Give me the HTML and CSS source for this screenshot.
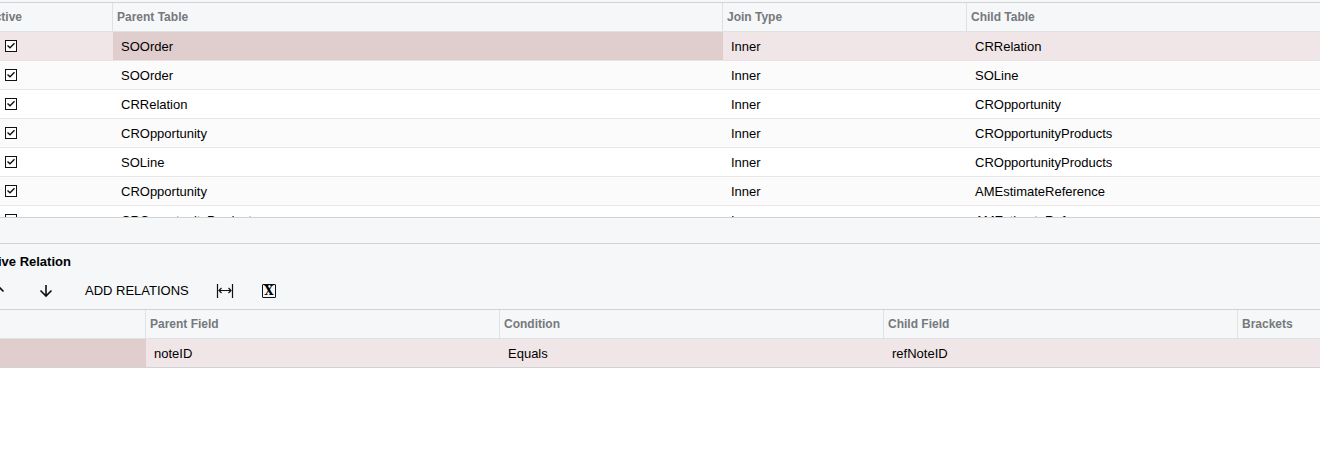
FILE: index.html
```html
<!DOCTYPE html>
<html lang="en">
<head>
    <meta charset="UTF-8">
    <title>Relations</title>
    <link rel="stylesheet" href="styles.css">
</head>
<body>
    <main class="page">
        <section class="grid tables-grid">
            <table>
                <colgroup>
                    <col class="col-active">
                    <col class="col-parent">
                    <col class="col-join">
                    <col>
                </colgroup>
                <thead>
                    <tr><th class="active-head">Active</th><th>Parent Table</th><th>Join Type</th><th>Child Table</th></tr>
                </thead>
                <tbody>
                    <tr class="selected">
                        <td class="check-cell"><input type="checkbox" aria-label="Active" checked></td>
                        <td class="current">SOOrder</td><td>Inner</td><td>CRRelation</td>
                    </tr>
                    <tr>
                        <td class="check-cell"><input type="checkbox" aria-label="Active" checked></td>
                        <td>SOOrder</td><td>Inner</td><td>SOLine</td>
                    </tr>
                    <tr>
                        <td class="check-cell"><input type="checkbox" aria-label="Active" checked></td>
                        <td>CRRelation</td><td>Inner</td><td>CROpportunity</td>
                    </tr>
                    <tr>
                        <td class="check-cell"><input type="checkbox" aria-label="Active" checked></td>
                        <td>CROpportunity</td><td>Inner</td><td>CROpportunityProducts</td>
                    </tr>
                    <tr>
                        <td class="check-cell"><input type="checkbox" aria-label="Active" checked></td>
                        <td>SOLine</td><td>Inner</td><td>CROpportunityProducts</td>
                    </tr>
                    <tr>
                        <td class="check-cell"><input type="checkbox" aria-label="Active" checked></td>
                        <td>CROpportunity</td><td>Inner</td><td>AMEstimateReference</td>
                    </tr>
                    <tr>
                        <td class="check-cell"><input type="checkbox" aria-label="Active" checked></td>
                        <td>CROpportunityProducts</td><td>Inner</td><td>AMEstimateReference</td>
                    </tr>
                </tbody>
            </table>
        </section>

        <div class="splitter"></div>

        <section class="relation">
            <h2>Active Relation</h2>
            <div class="toolbar">
                <button type="button" class="icon-btn arrow-btn" aria-label="Move up">
                    <svg width="14" height="14" viewBox="0 0 14 14"><path d="M7 13V2M1.500 7.500L7 2l5.500 5.500"/></svg>
                </button>
                <button type="button" class="icon-btn arrow-btn" aria-label="Move down">
                    <svg width="14" height="14" viewBox="0 0 14 14"><path d="M7 1v11M1.500 6.500L7 12l5.500-5.500"/></svg>
                </button>
                <button type="button" class="text-btn">ADD RELATIONS</button>
                <button type="button" class="icon-btn" aria-label="Fit columns">
                    <svg class="fit" width="18" height="14" viewBox="0 0 18 14">
                        <path d="M1.500 0v14M16.500 0v14M3 6.500h12"/>
                        <path d="M5.500 4L3 6.500L5.500 9M12.500 4L15 6.500L12.500 9"/>
                    </svg>
                </button>
                <button type="button" class="icon-btn" aria-label="Export to Excel"><span class="excel">X</span></button>
            </div>
            <div class="grid">
                <table>
                    <colgroup>
                        <col class="col-bracket">
                        <col class="col-field">
                        <col class="col-condition">
                        <col class="col-field">
                        <col>
                    </colgroup>
                    <thead>
                        <tr><th></th><th>Parent Field</th><th>Condition</th><th>Child Field</th><th>Brackets</th></tr>
                    </thead>
                    <tbody>
                        <tr class="selected"><td class="current"></td><td>noteID</td><td>Equals</td><td>refNoteID</td><td></td></tr>
                    </tbody>
                </table>
            </div>
        </section>
    </main>
</body>
</html>
```
FILE: styles.css
```css
body {
    margin: 0;
    font-family: "Liberation Sans", Arial, sans-serif;
    font-size: 13px;
    color: #000;
    background-color: #fff;
    overflow-x: hidden;
}
/* the form is scrolled a little to the right */
.page {
    margin-left: -32px;
    padding-top: 2px;
    background-color: #f5f7f9;
}
.grid {
    border-top: 1px solid #d0d3d6;
    background-color: #fff;
}
.tables-grid {
    height: 214px;
    overflow: hidden;
    border-bottom: 1px solid #d0d3d6;
}
table {
    width: 100%;
    table-layout: fixed;
    border-collapse: separate;
    border-spacing: 0;
}
.col-active {
    width: 145px;
}
.col-parent {
    width: 610px;
}
.col-join {
    width: 244px;
}
.col-bracket {
    width: 178px;
}
.col-field {
    width: 354px;
}
.col-condition {
    width: 384px;
}
th, td {
    box-sizing: border-box;
    height: 29px;
    text-align: left;
    white-space: nowrap;
}
th {
    padding: 0 4px;
    font-size: 12px;
    color: #75797c;
    background-color: #f5f7f9;
    border-right: 1px solid #dfe2e5;
    border-bottom: 1px solid #dfe2e5;
}
th:last-child {
    border-right: none;
}
.active-head {
    padding-left: 18px;
}
td {
    padding: 0 8px;
    border-bottom: 1px solid #e8e6e7;
}
tbody tr:nth-child(even) {
    background-color: #fbfbfb;
}
tbody tr.selected {
    background-color: #f0e6e7;
}
.selected td {
    border-bottom-color: #ece2e3;
}
.selected td.current {
    background-color: #e0cdcd;
}
.relation td {
    border-bottom-color: #d0d3d6;
}
.check-cell {
    padding-left: 37px;
}
input[type="checkbox"] {
    appearance: none;
    display: block;
    box-sizing: border-box;
    width: 12px;
    height: 12px;
    margin: 0;
    border: 1px solid #111;
    background-color: #fff;
}
input[type="checkbox"]:checked::before {
    content: "";
    display: block;
    width: 10px;
    height: 10px;
    background-color: #111;
    clip-path: polygon(10% 50%, 20% 40%, 40% 58%, 80% 18%, 90% 28%, 40% 78%);
}
.splitter {
    height: 25px;
    border-bottom: 1px solid #d0d3d6;
}
h2 {
    margin: 0;
    padding: 8px 9px 0;
    font-size: 13px;
    line-height: 20px;
}
.toolbar {
    display: flex;
    align-items: center;
    height: 37px;
    padding-left: 6px;
}
.toolbar button {
    height: 28px;
    padding: 0;
    border: none;
    background: none;
    font-family: inherit;
    font-size: 13px;
    color: #000;
}
.toolbar .icon-btn {
    display: flex;
    align-items: center;
    justify-content: center;
    width: 44px;
}
.toolbar .arrow-btn {
    width: 48px;
}
.toolbar .text-btn {
    padding: 0 14px 0 15px;
}
svg {
    fill: none;
    stroke: #111;
    stroke-width: 1.6;
}
svg.fit {
    stroke-width: 1.2;
}
.excel {
    box-sizing: border-box;
    width: 14px;
    height: 14px;
    border: 1px solid #111;
    border-radius: 1px;
    font-family: "DejaVu Serif", serif;
    font-size: 12px;
    font-weight: bold;
    line-height: 12px;
    text-align: center;
}
```
